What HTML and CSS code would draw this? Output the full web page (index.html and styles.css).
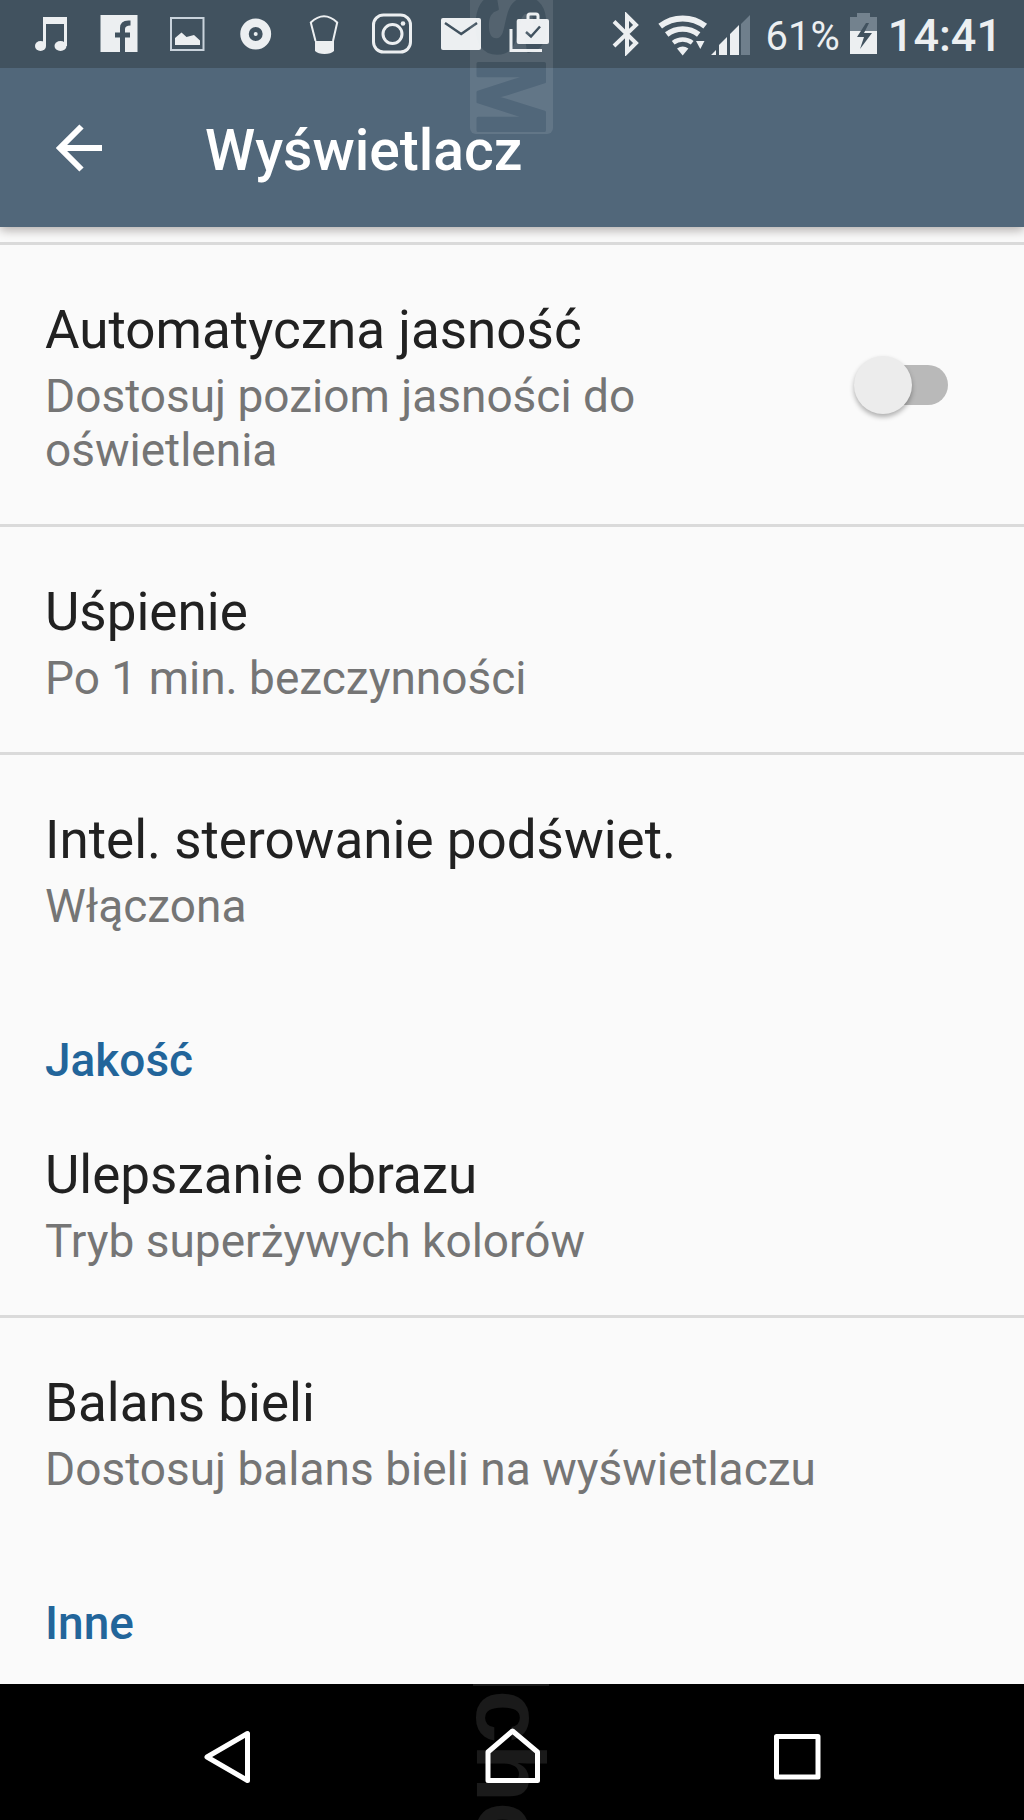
FILE: index.html
```html
<!DOCTYPE html>
<html lang="pl">
<head>
<meta charset="utf-8">
<meta name="viewport" content="width=device-width, initial-scale=1">
<title>Wyświetlacz</title>
<link rel="stylesheet" href="styles.css">
</head>
<body>
<header class="top">
  <div class="status">
    <div class="status-group notices">
      <svg class="icon" viewBox="0 0 44 44"><path d="M14 5h24v29h-3V12H17v22h-3z"/><ellipse cx="11.500" cy="34" rx="5.500" ry="5"/><ellipse cx="31.500" cy="34" rx="6" ry="5"/></svg>
      <svg class="icon" viewBox="0 0 44 44"><path d="M3.500 3h37v37H28V25.500h5v-5h-5v-3.500q0-3.500 5.500-3.500V8.500Q23 7.500 23 16v4.500h-5v5h5V40H3.500z"/></svg>
      <svg class="icon" viewBox="0 0 44 44"><path d="M6 6h32.500v32H6z" fill="none" stroke="#c9d3dc" stroke-width="2"/><path d="M10 33v-7l6.500-5.500 5 4.500 7.500-2 6 5.500V33z"/></svg>
      <svg class="icon" viewBox="0 0 44 44"><circle cx="22.700" cy="22" r="11.200" fill="none" stroke="#eceff1" stroke-width="8.500"/><circle cx="22.700" cy="22" r="2"/></svg>
      <svg class="icon" viewBox="0 0 44 44"><path d="M14.500 29L9.800 10.500Q23-2 36.200 10.500L32 29" fill="none" stroke="#eceff1" stroke-width="2"/><path d="M14 29h19v10q-3 3-9.500 3T14 39z"/></svg>
      <svg class="icon" viewBox="0 0 44 44"><g fill="none" stroke="#eceff1"><rect x="4.500" y="3" width="37" height="37" rx="10" stroke-width="3"/><circle cx="23.500" cy="22" r="9.500" stroke-width="3"/></g><circle cx="34" cy="11.500" r="2.300"/></svg>
      <svg class="icon" viewBox="0 0 44 44"><rect x="4" y="6" width="40" height="32" rx="2"/><path d="M8 11l16.200 11L40 11" fill="none" stroke="#41525f" stroke-width="2.500"/></svg>
      <svg class="icon" viewBox="0 0 44 44"><rect x="11.700" y="7" width="32.300" height="25" rx="2"/><path d="M23 8V4q0-2 2-2h6q2 0 2 2v4M6 17v21.500h31" fill="none" stroke="#eceff1" stroke-width="3"/><path d="M21 20l5 4.500 9-10" fill="none" stroke="#41525f" stroke-width="2.500"/></svg>
    </div>
    <div class="status-group">
      <svg class="icon icon-bt" viewBox="0 0 32 44"><path d="M5 9.500l22 21.500-9 9V4l9 9L5 34" fill="none" stroke="#eceff1" stroke-width="4"/></svg>
      <svg class="icon icon-wifi" viewBox="0 0 52 44"><g fill="none" stroke="#eceff1"><path d="M3.200 14.200A36.500 36.500 0 0 1 48.200 14.200" stroke-width="6"/><path d="M9.700 22.500A26 26 0 0 1 41.700 22.500" stroke-width="5.500"/><path d="M16.200 30.800A15.500 15.500 0 0 1 35.200 30.800" stroke-width="4.500"/></g><path d="M20 36.500q5.700-4 11.400 0L25.700 43.500zM39 29h8.500l-4.200 8z"/></svg>
      <svg class="icon icon-signal" viewBox="0 0 44 44"><path d="M2 43l5-5v5zM10 43V33l8-8v18zM21 43V22l9-9v30z"/><path d="M32 43V12l9-9v40z" fill="#6f7f8c"/></svg>
      <span class="percent">61%</span>
      <svg class="icon icon-battery" viewBox="0 0 28 44"><path d="M0 19V5h7V1h13v4h7v14z" fill="#73828e"/><path d="M0 19h27v23H0z"/><path d="M16 11L7 25h7l-4 12 12-16h-8l5-10z" fill="#41525f"/></svg>
      <span class="clock">14:41</span>
    </div>
  </div>
  <div class="appbar">
    <button class="back" aria-label="Wstecz"><svg viewBox="0 0 48 48"><path d="M46 24H5M25.500 2.500L4 24l21.500 21.500" fill="none" stroke="#fff" stroke-width="6"/></svg></button>
    <h1>Wyświetlacz</h1>
  </div>
  <svg class="mark mark-top" viewBox="0 0 84 135" aria-hidden="true">
    <mask id="cut"><rect width="84" height="135" fill="#fff"/><text transform="translate(8 -7) rotate(90)">SM</text></mask>
    <rect y="-10" width="83" height="144" rx="6" fill="#fff" fill-opacity=".1" mask="url(#cut)"/>
  </svg>
</header>

<main>
  <section class="list">
    <label class="row" for="auto">
      <span class="words"><span class="name">Automatyczna jasność</span><span class="note">Dostosuj poziom jasności do oświetlenia</span></span>
      <input class="switch" type="checkbox" role="switch" id="auto">
    </label>
    <a class="row" href="#sleep"><span class="words"><span class="name">Uśpienie</span><span class="note">Po 1 min. bezczynności</span></span></a>
    <a class="row" href="#backlight"><span class="words"><span class="name">Intel. sterowanie podświet.</span><span class="note">Włączona</span></span></a>
  </section>
  <h2>Jakość</h2>
  <section>
    <a class="row" href="#image"><span class="words"><span class="name">Ulepszanie obrazu</span><span class="note">Tryb superżywych kolorów</span></span></a>
    <a class="row" href="#white"><span class="words"><span class="name">Balans bieli</span><span class="note">Dostosuj balans bieli na wyświetlaczu</span></span></a>
  </section>
  <h2>Inne</h2>
</main>

<nav class="keys">
  <svg class="mark" viewBox="0 0 84 136" aria-hidden="true">
    <g fill="#fff" fill-opacity=".1"><rect x="3" width="76" height="2"/><text transform="translate(7 6) rotate(90)">cho</text></g>
  </svg>
  <button aria-label="Wstecz"><svg viewBox="0 0 60 60"><path d="M50.500 7.500v47L10 31z"/></svg></button>
  <button aria-label="Ekran główny"><svg viewBox="0 0 60 60"><path d="M30.500 5L55.500 26v28.500h-49.500V26z"/></svg></button>
  <button aria-label="Ostatnie"><svg viewBox="0 0 60 60"><path d="M9.500 10.500h41.500v40.500h-41.500z"/></svg></button>
</nav>
</body>
</html>
```
FILE: styles.css
```css
* {
  box-sizing: border-box;
}

body {
  margin: 0;
  min-height: 100vh;
  display: flex;
  flex-direction: column;
  background: #fafafa;
  color: #212121;
  font-family: Roboto, "Noto Sans", sans-serif;
}

button {
  padding: 0;
  border: 0;
  background: none;
}

svg {
  display: block;
}

.top {
  position: relative;
  z-index: 1;
  background: #51677a;
  box-shadow: 0 3px 10px rgba(60, 50, 45, .4);
}

.status {
  display: flex;
  justify-content: space-between;
  height: 68px;
  padding: 0 22px 0 29px;
  background: #41525f;
  color: #eceff1;
}

.status-group {
  display: flex;
  align-items: center;
}

.notices {
  gap: 24px;
}

.icon {
  width: 44px;
  height: 44px;
  fill: #eceff1;
}

.icon-bt {
  width: 32px;
  margin-right: 16px;
}

.icon-wifi {
  width: 52px;
}

.icon-battery {
  width: 28px;
  margin: 0 10px;
}

.percent {
  margin-left: 13px;
  padding-top: 4px;
  font-size: 40px;
}

.clock {
  padding-top: 2px;
  font-size: 45px;
  font-weight: 500;
}

.appbar {
  display: flex;
  align-items: center;
  gap: 101px;
  height: 159px;
  padding: 0 56px;
  color: #fff;
}

.back svg {
  width: 48px;
  height: 48px;
}

h1 {
  margin: 0;
  padding-top: 6px;
  font-size: 57px;
  font-weight: 500;
}

.mark {
  position: absolute;
  top: 0;
  left: calc(50% - 42px);
  width: 84px;
  pointer-events: none;
}

.mark text {
  font: bold 96px "Liberation Sans", sans-serif;
}

.mark-top text {
  stroke: #000;
  stroke-width: 3;
  stroke-linejoin: round;
}

main {
  flex: 1;
  padding-top: 15px;
}

.list {
  border-top: 3px solid #dadada;
}

.row {
  display: flex;
  align-items: center;
  gap: 70px;
  padding: 0 76px 0 45px;
  color: inherit;
  text-decoration: none;
}

.row + .row {
  border-top: 3px solid #dadada;
}

.words {
  flex: 1;
  display: flex;
  flex-direction: column;
  gap: 8px;
  padding: 54px 0 47px;
}

.name {
  font-size: 53px;
  line-height: 62px;
}

.note {
  color: #757575;
  font-size: 46px;
  line-height: 54px;
}

.switch {
  appearance: none;
  flex: none;
  position: relative;
  width: 94px;
  height: 58px;
  margin: 0;
}

.switch::before {
  content: "";
  position: absolute;
  inset: 9px 0 9px 8px;
  border-radius: 20px;
  background: #b9b9b9;
}

.switch::after {
  content: "";
  position: absolute;
  left: 0;
  top: 0;
  width: 58px;
  height: 58px;
  border-radius: 50%;
  background: #ececec;
  box-shadow: 0 3px 5px rgba(0, 0, 0, .3);
}

.switch:checked::after {
  left: 36px;
}

h2 {
  margin: 0;
  padding: 53px 45px 3px;
  color: #22659a;
  font-size: 46px;
  font-weight: 500;
  line-height: 54px;
}

.keys {
  position: relative;
  display: flex;
  justify-content: center;
  gap: 225px;
  height: 136px;
  padding-top: 7px;
  background: #000;
  overflow: hidden;
}

.keys button svg {
  width: 60px;
  height: 60px;
  fill: none;
  stroke: #fff;
  stroke-width: 5;
  stroke-linejoin: round;
}
```
